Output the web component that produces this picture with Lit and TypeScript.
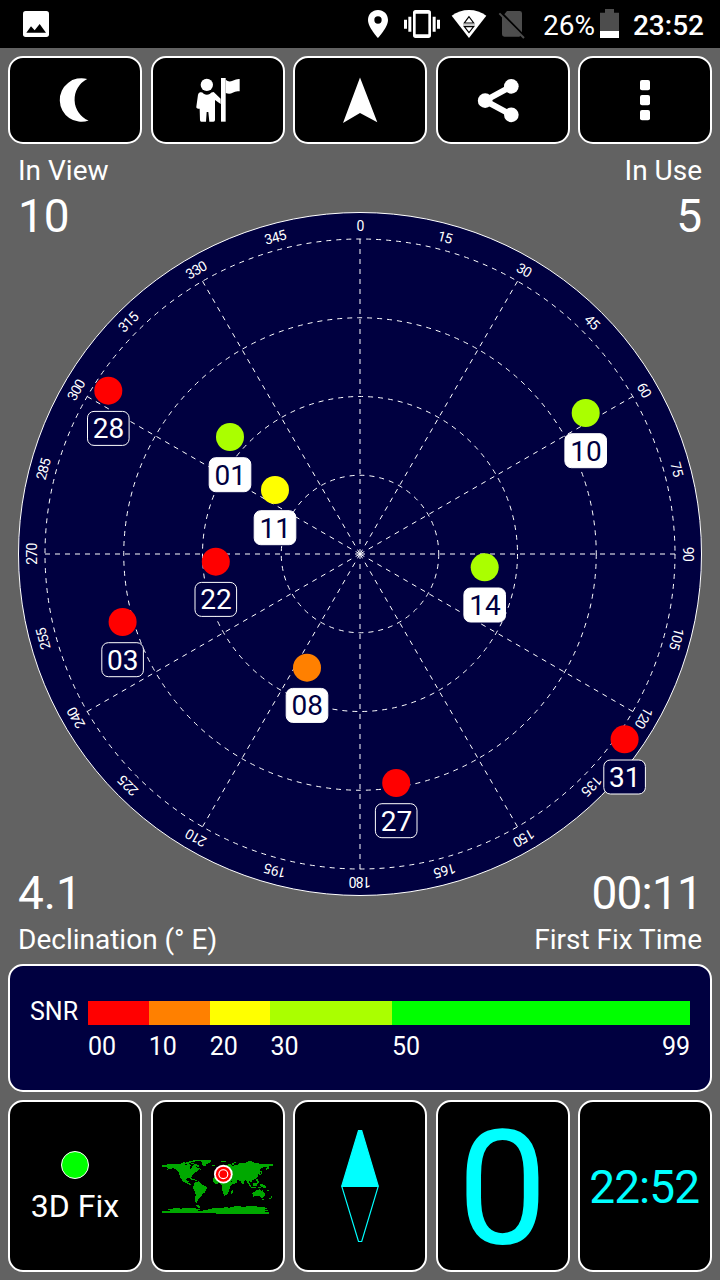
import { LitElement, html, svg, css } from "lit";
import { customElement } from "lit/decorators.js";

interface Satellite {
  id: string;
  x: number;
  y: number;
  color: string;
  used: boolean;
}

const RED = "#ff0000";
const ORANGE = "#ff8000";
const YELLOW = "#ffff00";
const LIME = "#aaff00";
const GREEN = "#00ff00";

const SATELLITES: Satellite[] = [
  { id: "28", x: 108.3, y: 390.7, color: RED, used: false },
  { id: "01", x: 230, y: 437, color: LIME, used: true },
  { id: "11", x: 275, y: 490, color: YELLOW, used: true },
  { id: "22", x: 215.8, y: 561.7, color: RED, used: false },
  { id: "03", x: 122.6, y: 622, color: RED, used: false },
  { id: "08", x: 307, y: 667.7, color: ORANGE, used: true },
  { id: "27", x: 396.2, y: 783, color: RED, used: false },
  { id: "31", x: 624.6, y: 739.3, color: RED, used: false },
  { id: "14", x: 484.7, y: 567.3, color: LIME, used: true },
  { id: "10", x: 585.7, y: 413, color: LIME, used: true },
];

const SNR_BANDS = [
  { from: 0, to: 10, color: RED },
  { from: 10, to: 20, color: ORANGE },
  { from: 20, to: 30, color: YELLOW },
  { from: 30, to: 50, color: LIME },
  { from: 50, to: 99, color: GREEN },
];

@customElement("status-bar")
class StatusBar extends LitElement {
  static styles = css`
    :host {
      display: flex;
      height: 48px;
      background: #000;
      color: #fff;
      font-family: Roboto, sans-serif;
      font-size: 28px;
      line-height: 51px;
      white-space: nowrap;
    }
    .left { width: 360px; height: 48px; flex: none; }
    .icons { width: 176px; height: 48px; flex: none; }
    .percent { width: 63px; padding-left: 7px; box-sizing: border-box; }
    .battery { width: 21px; height: 48px; flex: none; }
    .clock { flex: 1; text-align: right; padding-right: 16px; font-weight: 500; }
  `;
  render() {
    return html`
      <svg class="left" viewBox="0 0 1080 144">
        <rect x="69" y="33" width="78" height="78" rx="8" fill="#fff" />
        <path d="M79 98 93 79 104 91 119 72 138 98z" fill="#000" />
      </svg>
      <svg class="icons" viewBox="0 0 528 144">
        <path fill="#fff" fill-rule="evenodd"
          d="M54 30c-17 0-30 13-30 30 0 22 30 54 30 54s30-32 30-54c0-17-13-30-30-30zm0 19a11 11 0 1 1 0 22 11 11 0 0 1 0-22z" />
        <path fill="#fff" fill-rule="evenodd"
          d="M167 30h38q8 0 8 8v68q0 8-8 8h-38q-8 0-8-8V38q0-8 8-8zm0 11v62h38V41zM132 59h9v27h-9zM145 50h9v45h-9zM218 50h9v45h-9zM231 59h9v27h-9z" />
        <path fill="#fff" d="M275 47Q298 30 327 30T379 47L327 114z" />
        <path fill="#fff" stroke="#000" stroke-width="3.5" d="M327 50 313 69h28zM327 98 313 80h28z" />
        <path fill="none" stroke="#555" stroke-width="2" d="M309 75h36" />
        <path fill="#4d4d4d" d="M441 33h38q7 0 7 7v57L433 43zM426 49l57 57q-2 4-6 4h-44q-7 0-7-7z" />
        <path fill="none" stroke="#4d4d4d" stroke-width="6" d="M418 40l74 74" />
      </svg>
      <span class="percent">26%</span>
      <svg class="battery" viewBox="717 0 63 144">
        <path fill="#4d4d4d" d="M735 27h27v11h15v76h-57V38h15z" />
        <path fill="#fff" d="M720 93h57v21h-57z" />
      </svg>
      <span class="clock">23:52</span>
    `;
  }
}

@customElement("tool-bar")
class ToolBar extends LitElement {
  static styles = css`
    :host {
      display: grid;
      grid-template-columns: repeat(5, 134px);
      justify-content: space-between;
      height: 88px;
    }
    .tool {
      box-sizing: border-box;
      height: 88px;
      border: 2px solid #fff;
      border-radius: 15px;
      background: #000;
    }
    .tool svg { display: block; width: 130px; height: 84px; fill: #fff; }
  `;
  render() {
    return html`
      <div class="tool">
        <svg viewBox="10 58 130 84"><path d="M87.2 78.9A21.8 21.8 0 1 0 88.6 120.6 23 23 0 0 1 87.2 78.9z" /></svg>
      </div>
      <div class="tool">
        <svg viewBox="459 174 390 252">
          <circle cx="620.5" cy="254.5" r="18.5" />
          <path d="M600 277Q607 276 611 281Q620 287 629 282Q634 276 641 276L662 296V312L645 300V360Q645 365 640 365H628L625 336H620L618 365H604Q600 365 600 360L599 326Q588 326 589 320L594 284Q595 279 600 277z" />
          <path d="M663 234h14v131h-14z" />
          <path d="M677 239Q686 248 698 242T719 237V274Q707 272 698 278T677 279z" />
        </svg>
      </div>
      <div class="tool">
        <svg viewBox="295 58 130 84"><path d="M360 77.5 343 123 360 113 377.3 122.3z" /></svg>
      </div>
      <div class="tool">
        <svg viewBox="234 174 390 252">
          <path d="M454 259 375 302 454 344.5" fill="none" stroke="#fff" stroke-width="18" />
          <circle cx="454" cy="259" r="22" /><circle cx="375.5" cy="302" r="22" /><circle cx="454" cy="344.5" r="22" />
        </svg>
      </div>
      <div class="tool">
        <svg viewBox="660 174 390 252">
          <rect x="840" y="240" width="30" height="31" rx="6" />
          <rect x="840" y="285" width="30" height="31" rx="6" />
          <rect x="840" y="330" width="30" height="31" rx="6" />
        </svg>
      </div>
    `;
  }
}

@customElement("sky-view")
class SkyView extends LitElement {
  static styles = css`
    :host { display: grid; height: 820px; font-family: Roboto, sans-serif; color: #fff; }
    .sky, .stats { grid-area: 1 / 1; }
    .sky { display: block; width: 720px; height: 820px; }
    .stats {
      display: flex;
      flex-direction: column;
      justify-content: space-between;
      padding: 11px 18px 8px;
    }
    .row { display: flex; justify-content: space-between; }
    .right { text-align: right; }
    .label { font-size: 28px; line-height: 32px; }
    .value { font-size: 46px; line-height: 59px; }
    .low .value { line-height: 61px; }
    .timer { letter-spacing: -0.8px; }
    .grid { fill: none; stroke: #fff; stroke-width: 1; stroke-dasharray: 5 5; }
    .edge { fill: #000040; stroke: #fff; stroke-width: 1; }
    .degree { fill: #fff; font-size: 14px; text-anchor: middle; letter-spacing: -0.7px; }
    .sat { font-size: 28px; text-anchor: middle; }
  `;

  private spoke(deg: number) {
    const a = (deg * Math.PI) / 180;
    return svg`<line class="grid" x1="360" y1="554" x2=${360 + 315 * Math.sin(a)} y2=${554 - 315 * Math.cos(a)} />`;
  }

  private satellite(s: Satellite) {
    return svg`
      <circle cx=${s.x} cy=${s.y} r="14" fill=${s.color} />
      <rect x=${s.x - 20.8} y=${s.y + 20.7} width="41.6" height="34" rx="6.5"
        fill=${s.used ? "#fff" : "#000040"} stroke="#fff" stroke-width="1" />
      <text class="sat" x=${s.x + 0.2} y=${s.y + 47.7} fill=${s.used ? "#000040" : "#fff"}>${s.id}</text>
    `;
  }

  render() {
    const spokes = Array.from({ length: 12 }, (_, i) => i * 30);
    const degrees = Array.from({ length: 24 }, (_, i) => i * 15);
    return html`
      <svg class="sky" viewBox="0 144 720 820">
        <circle class="edge" cx="360" cy="554" r="341.5" />
        ${[78.75, 157.5, 236.25, 315].map((r) => svg`<circle class="grid" cx="360" cy="554" r=${r} />`)}
        ${spokes.map((d) => this.spoke(d))}
        ${degrees.map(
          (d) => svg`<text class="degree" x="360" y="231" transform="rotate(${d} 360 554)">${d}</text>`
        )}
        ${SATELLITES.map((s) => this.satellite(s))}
      </svg>
      <div class="stats">
        <div class="row">
          <div><div class="label">In View</div><div class="value">10</div></div>
          <div class="right"><div class="label">In Use</div><div class="value">5</div></div>
        </div>
        <div class="row low">
          <div><div class="value">4.1</div><div class="label">Declination (° E)</div></div>
          <div class="right"><div class="value timer">00:11</div><div class="label">First Fix Time</div></div>
        </div>
      </div>
    `;
  }
}

@customElement("snr-legend")
class SnrLegend extends LitElement {
  static styles = css`
    :host {
      display: grid;
      grid-template-columns: 58px 602px;
      grid-template-rows: 24px 43px;
      align-content: start;
      box-sizing: border-box;
      height: 127.5px;
      padding: 35px 20px 0;
      border: 2px solid #fff;
      border-radius: 15px;
      background: #000040;
      color: #fff;
      font-family: Roboto, sans-serif;
      font-size: 25px;
    }
    .name { line-height: 22px; }
    .bar, .scale { display: flex; }
    .scale { grid-column: 2; line-height: 43px; }
    .tick { display: flex; justify-content: space-between; }
  `;
  render() {
    return html`
      <div class="name">SNR</div>
      <div class="bar">
        ${SNR_BANDS.map((b) => html`<div style="flex: ${b.to - b.from} 0 0; background: ${b.color}"></div>`)}
      </div>
      <div class="scale">
        ${SNR_BANDS.map(
          (b) => html`<div class="tick" style="flex: ${b.to - b.from} 0 0">
            <span>${String(b.from).padStart(2, "0")}</span>${b.to === 99 ? html`<span>99</span>` : ""}
          </div>`
        )}
      </div>
    `;
  }
}

@customElement("gauge-row")
class GaugeRow extends LitElement {
  static styles = css`
    :host {
      display: grid;
      grid-template-columns: repeat(5, 134px);
      justify-content: space-between;
      height: 172px;
      font-family: Roboto, sans-serif;
    }
    .card {
      box-sizing: border-box;
      height: 172px;
      border: 2px solid #fff;
      border-radius: 15px;
      background: #000;
      display: flex;
      flex-direction: column;
      align-items: center;
    }
    .card svg { display: block; width: 130px; height: 168px; flex: none; }
    .lamp {
      box-sizing: border-box;
      width: 28px;
      height: 28px;
      margin-top: 49px;
      border: 1.5px solid #fff;
      border-radius: 50%;
      background: #00ff00;
      flex: none;
    }
    .fix { margin-top: 7px; color: #fff; font-size: 32px; line-height: 40px; }
    .speed { color: #00ffff; font-size: 160px; line-height: 173px; }
    .time { color: #00ffff; font-size: 46px; line-height: 171px; letter-spacing: -0.9px; padding-right: 1.5px; }
    .land { fill: #00a800; }
  `;
  render() {
    return html`
      <div class="card"><div class="lamp"></div><div class="fix">3D Fix</div></div>
      <div class="card">
        <svg viewBox="9 -114 390 504">
          <g class="land" shape-rendering="crispEdges">
            <path d="M36 75h14l1-4h25l8 1 8-1 10 2 8 1 8-3 4 6-4 4 4 7 5-6 1-7 8 2 4 6 6 3-1 7-6 3-6 3-3 5-5 5-1 4 2 7-4-2-3-4-7 1-3 4 3 5 5-1v3l-3 1 4 3 5 3v3l-6-2-6-4-8-3-6-5-3-6-4-5-2-8-2-8-8-7-9-3-12 2-4 4-3-1 4-5-4-3H36z" />
            <path d="M90 69h8v-3h8v3h6v3H93zM108 66h9v-2h6v4h-6v3h-9zM120 64h9v-3h18v3h-12v3h-12zM123 70h9v3h-9zM132 72h9v3h6v6h-6v-4h-9zM114 72h6v4h-6z" />
            <path d="M147 61h36v4h-2v5h-6v3h-6l-3 5h-6l-4-6v-5h-3v-3h-6z" />
            <path d="M126 117h9v3h-9zM135 120h6v3h-6zM144 123h3v3h-3zM186 74h9v3h-9zM144 84h6v4h-6zM150 88h3v3h-3z" />
            <path d="M133 128 138 125 148 127 152 131 158 134 165 138 171 141 169 148 165 157 158 161 154 168 148 173 144 180 141 184 143 189 137 188 135 181 137 164 136 157 131 149 129 142 132 136zM138 195h9v3h-9zM143 200h6v3h-6z" />
            <path d="M198 106 192 112 189 118 190 125 196 131 211 130 216 137 216 149 219 158 222 167 229 166 235 158 237 152 240 143 243 136 250 128 245 127 238 110 220 95z" />
            <path d="M246 149h3v9h-3v4h-4v-10h4zM214 63h13v4h-13zM228 76l6-3h10l4 5 6-3h10l3-5 9-2 6 2 8-4 6-3h9l5 4 8 2h8v3h14l6-1h22v6h-7l-5 4v5l-6 4-2-6 3-3h-9l-9 3-3 6 3 5-5 7-6 2 2 5-5 7-7 3-5 2v3l-5 3-4-3-2 4 4 7-5-2-4-7-3-5-4 1-3 4-4 8-4-7-2-4-9-4-2 2 3 2-4 6-8 4-6-8-4-12z" />
            <path d="M247 75v-5h5v-3h7v3h-7v5zM334 93h3v9h-4v4h-6v-3h5zM279 127h3v4h-3zM319 117h4v7h3v4h-4v-4h-3zM291 126h4l9 11v3h-4zM303 140h15v3h-15zM309 129h8v8h-7zM319 130h6v3h-3v6h-3zM324 141h8v3h-8zM330 133h8l9 5 3 6h-7l-8-3-5-4z" />
            <path d="M307 160 311 157 317 152 321 150 324 153 328 148 333 151 336 153 338 149 341 156 345 162 344 168 340 172 334 174 329 169 322 167 315 169 309 171zM336 176h5v3h-5zM362 169h4v4h-3v4h-6v-3h5zM352 150h4v3h-4z" />
            <path d="M36 219v-5h24v-3h-6v-3h15v-3h20v3h6v-3h24v-2h18v3h9v-6h-6v-3h9v4h-3v5h4v4h-6v3h15v-3h15v-4h12v-3h37v-2h10v3h6v-3h14v-4h20v3h15v-3h33v3h24v3h6v5h-5v3h7v3h-7v3h11v5z" />
          </g>
          <circle cx="220" cy="102.5" r="28" fill="#fff" />
          <circle cx="220" cy="102.5" r="22.5" fill="#f00" />
          <circle cx="220" cy="102.5" r="15" fill="#fff" />
          <circle cx="220" cy="102.5" r="11.5" fill="#f00" />
        </svg>
      </div>
      <div class="card">
        <svg viewBox="295 1102 130 168" stroke="#0ff" stroke-width="1.2">
          <path fill="#0ff" d="M358.5 1130.5h3.2L378.2 1186H341.8z" />
          <path fill="none" d="M341.8 1186.3 358.5 1241.5h3.2L378.2 1186.3z" />
        </svg>
      </div>
      <div class="card"><div class="speed">0</div></div>
      <div class="card"><div class="time">22:52</div></div>
    `;
  }
}

@customElement("app-root")
class AppRoot extends LitElement {
  static styles = css`
    :host {
      display: flex;
      flex-direction: column;
      width: 720px;
      height: 1280px;
      background: #626262;
      overflow: hidden;
    }
    tool-bar { margin: 8px 8px 0; }
    snr-legend { margin: 0 8px; }
    gauge-row { margin: 8.5px 8px 0; }
  `;
  render() {
    return html`
      <status-bar></status-bar>
      <tool-bar></tool-bar>
      <sky-view></sky-view>
      <snr-legend></snr-legend>
      <gauge-row></gauge-row>
    `;
  }
}
